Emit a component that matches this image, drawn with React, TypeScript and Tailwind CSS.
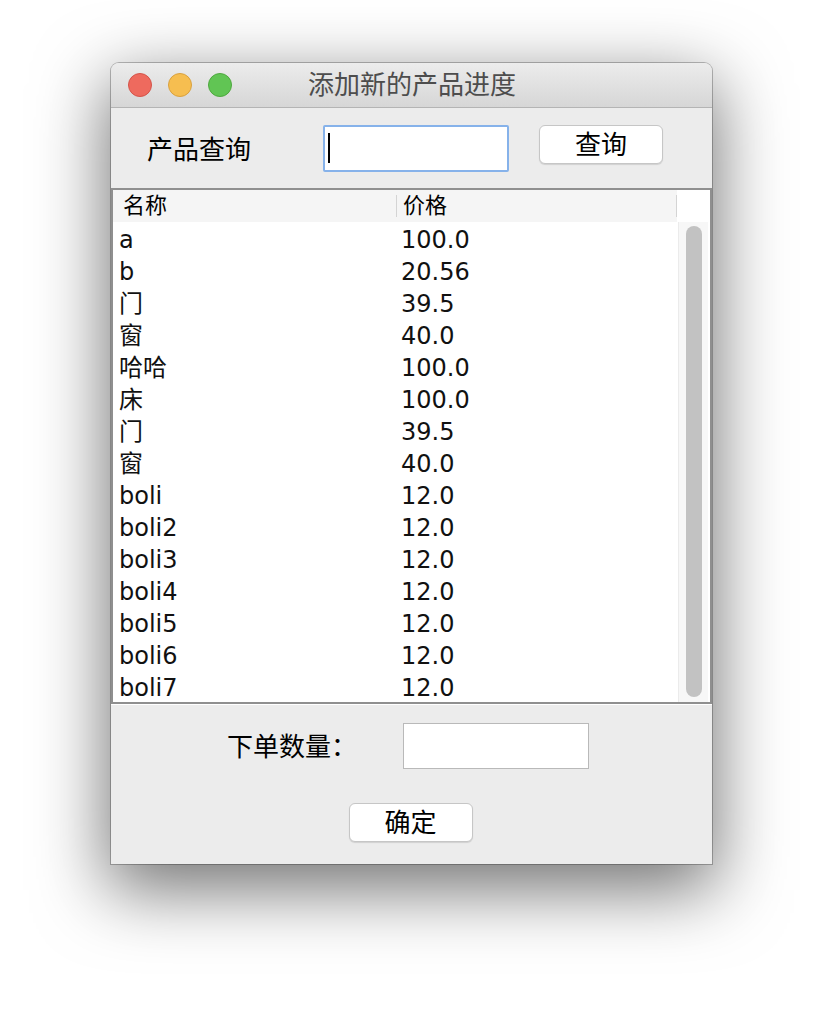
import React from 'react';

const font = "font-['DejaVu_Sans','Noto_Sans_CJK_SC',sans-serif]";

const products: { name: string; price: string }[] = [
  { name: 'a', price: '100.0' },
  { name: 'b', price: '20.56' },
  { name: '门', price: '39.5' },
  { name: '窗', price: '40.0' },
  { name: '哈哈', price: '100.0' },
  { name: '床', price: '100.0' },
  { name: '门', price: '39.5' },
  { name: '窗', price: '40.0' },
  { name: 'boli', price: '12.0' },
  { name: 'boli2', price: '12.0' },
  { name: 'boli3', price: '12.0' },
  { name: 'boli4', price: '12.0' },
  { name: 'boli5', price: '12.0' },
  { name: 'boli6', price: '12.0' },
  { name: 'boli7', price: '12.0' },
];

const TrafficLights: React.FC = () => (
  <div className="flex items-center gap-[16px] pl-[17px]">
    <span className="w-[24px] h-[24px] rounded-full bg-[#ee6a5e] border border-[#d4544a]" />
    <span className="w-[24px] h-[24px] rounded-full bg-[#f6be50] border border-[#d9a13f]" />
    <span className="w-[24px] h-[24px] rounded-full bg-[#61c554] border border-[#4fa83f]" />
  </div>
);

const App: React.FC = () => {
  return (
    <div className={`min-h-screen bg-white pt-[63px] pl-[111px] ${font}`}>
      <div className="w-[601px] h-[801px] flex flex-col rounded-t-[8px] bg-[#ececec] overflow-hidden ring-1 ring-black/25 shadow-[0_22px_70px_4px_rgba(0,0,0,0.55)]">
        {/* Title bar */}
        <div className="h-[45px] shrink-0 grid grid-cols-[1fr_auto_1fr] items-center bg-gradient-to-b from-[#ececec] to-[#d6d6d6] border-b border-[#b4b4b4]">
          <TrafficLights />
          <div className="text-[26px] leading-none text-[#4d4d4d] pb-[1px] pl-[1px]">添加新的产品进度</div>
          <div />
        </div>

        {/* Search panel */}
        <div className="h-[80px] shrink-0 flex items-center pl-[36px]">
          <div className="w-[176px] text-[26px] leading-none text-black pt-[3px]">产品查询</div>
          <div className="w-[186px] h-[47px] bg-white border-2 border-[#86b2ea] rounded-[2px] flex items-center pl-[3px]">
            <span className="w-[2px] h-[30px] bg-black" />
          </div>
          <button className="ml-[30px] mb-[7px] w-[124px] h-[39px] bg-white rounded-[6px] border border-[#c6c6c6] shadow-[0_1px_1px_rgba(0,0,0,0.12)] text-[26px] leading-none text-black">
            查询
          </button>
        </div>

        {/* Table */}
        <div className="h-[516px] shrink-0 border-2 border-[#8f8f8f] bg-white flex flex-col">
          <div className="h-[32px] shrink-0 flex">
            <div className="w-[564px] flex items-center bg-[#f5f5f5] text-[22px] leading-none text-black">
              <div className="w-[283px] pl-[10px]">名称</div>
              <span className="w-px h-[22px] bg-[#d4d4d4]" />
              <div className="w-[279px] pl-[6px]">价格</div>
              <span className="w-px h-[22px] bg-[#d4d4d4]" />
            </div>
          </div>
          <div className="flex-1 flex min-h-0">
            <div className="w-[565px] flex flex-col text-[24px] text-[#111]">
              {products.map((p, i) => (
                <div key={i} className="h-[32px] shrink-0 flex items-center pt-[4px]">
                  <div className="w-[284px] pl-[6px] leading-none">{p.name}</div>
                  <div className="pl-[4px] leading-none">{p.price}</div>
                </div>
              ))}
            </div>
            <div className="w-[30px] bg-[#f7f7f7] border-l border-[#ebebeb] pl-[7px] pt-[4px] pb-[5px] flex">
              <div className="w-[16px] h-full rounded-full bg-[#c2c2c2]" />
            </div>
          </div>
        </div>

        {/* Order panel */}
        <div className="flex-1 flex flex-col items-center border-t border-white">
          <div className="mt-[18px] w-full flex items-center pl-[116px]">
            <div className="w-[176px] text-[26px] leading-none text-black pt-[2px]">下单数量：</div>
            <div className="w-[186px] h-[46px] bg-white border border-[#b9b9b9]" />
          </div>
          <button className="mt-[34px] ml-[-2px] w-[124px] h-[39px] bg-white rounded-[6px] border border-[#c6c6c6] shadow-[0_1px_1px_rgba(0,0,0,0.12)] text-[26px] leading-none text-black">
            确定
          </button>
        </div>
      </div>
    </div>
  );
};

export default App;
